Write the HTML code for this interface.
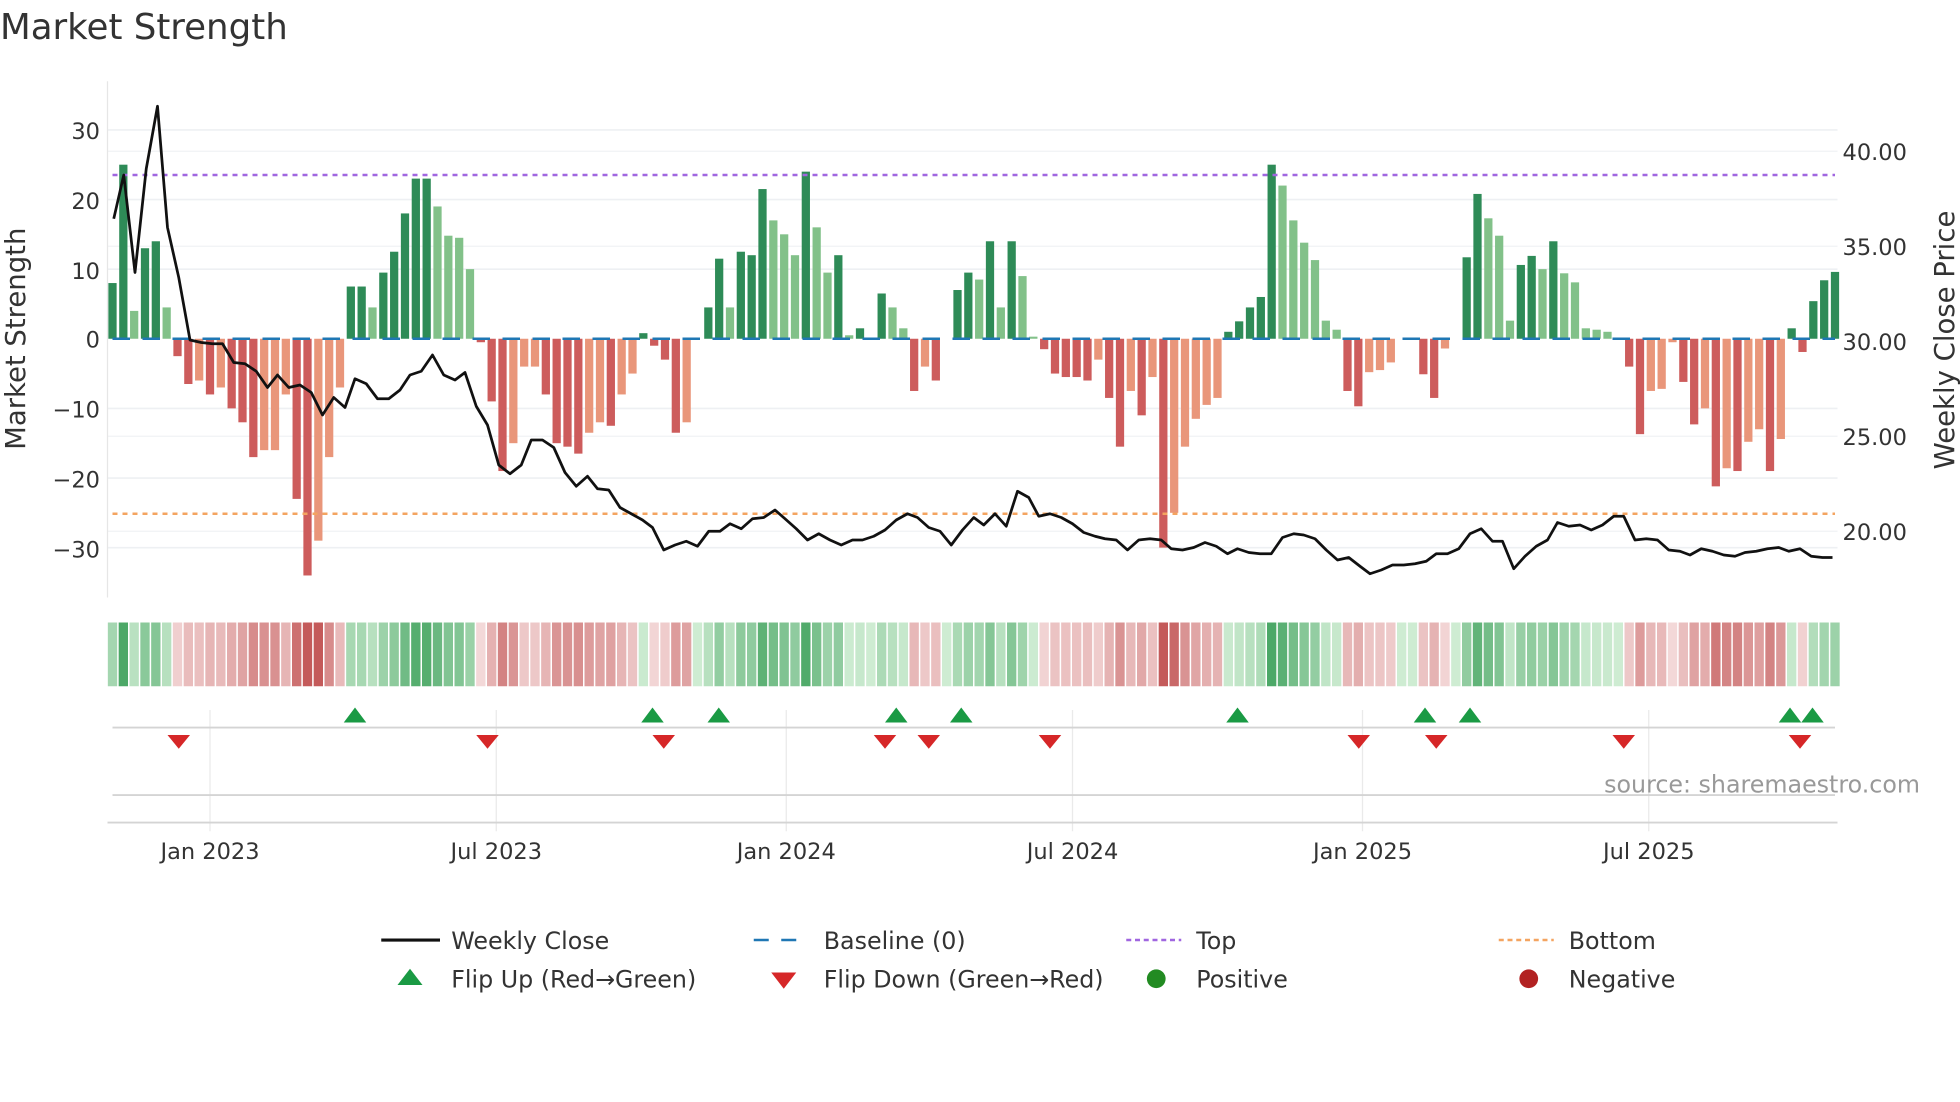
<!DOCTYPE html>
<html><head><meta charset="utf-8"><style>
html,body{margin:0;padding:0;background:#fff;}
svg{display:block;font-family:"DejaVu Sans","Liberation Sans",sans-serif;}
</style></head><body>
<svg id="s" width="1960" height="1102" viewBox="0 0 1568 881.6" xmlns="http://www.w3.org/2000/svg">
<rect width="1568" height="882" fill="#fff"/>
<text x="0" y="31" font-size="28.5" fill="#333">Market Strength</text>
<g id="grid"></g>
<g id="bars"></g>
<line x1="90" y1="271" x2="1468" y2="271" stroke="#1f77b4" stroke-width="2" stroke-dasharray="14,10"/>
<line x1="90" y1="140" x2="1468" y2="140" stroke="#a066e0" stroke-width="2" stroke-dasharray="4,4"/>
<line x1="90" y1="411" x2="1468" y2="411" stroke="#f4a460" stroke-width="2" stroke-dasharray="4,4"/>
<polyline id="price" fill="none" stroke="#111" stroke-width="2.2" stroke-linejoin="round"/>
<g id="heat"></g>
<g id="marks"></g>
<g font-size="18" fill="#333">
<text x="80" y="111" text-anchor="end">30</text>
<text x="80" y="167" text-anchor="end">20</text>
<text x="80" y="223" text-anchor="end">10</text>
<text x="80" y="278" text-anchor="end">0</text>
<text x="80" y="334" text-anchor="end">−10</text>
<text x="80" y="390" text-anchor="end">−20</text>
<text x="80" y="446" text-anchor="end">−30</text>
<text x="1474" y="128">40.00</text>
<text x="1474" y="204">35.00</text>
<text x="1474" y="280">30.00</text>
<text x="1474" y="356">25.00</text>
<text x="1474" y="432">20.00</text>
<text x="168" y="687" text-anchor="middle">Jan 2023</text>
<text x="397" y="687" text-anchor="middle">Jul 2023</text>
<text x="629" y="687" text-anchor="middle">Jan 2024</text>
<text x="858" y="687" text-anchor="middle">Jul 2024</text>
<text x="1090" y="687" text-anchor="middle">Jan 2025</text>
<text x="1319" y="687" text-anchor="middle">Jul 2025</text>
</g>
<text transform="translate(20,271) rotate(-90)" font-size="22" fill="#333" text-anchor="middle">Market Strength</text>
<text transform="translate(1563,272) rotate(-90)" font-size="22" fill="#333" text-anchor="middle">Weekly Close Price</text>
<text x="1536" y="634" font-size="19" fill="#999" text-anchor="end">source: sharemaestro.com</text>
<g font-size="19" fill="#333">
<line x1="305" y1="752" x2="352" y2="752" stroke="#111" stroke-width="2.5"/>
<text x="361" y="759">Weekly Close</text>
<line x1="603" y1="752" x2="647" y2="752" stroke="#1f77b4" stroke-width="2" stroke-dasharray="12,10"/>
<text x="659" y="759">Baseline (0)</text>
<line x1="901" y1="752" x2="945" y2="752" stroke="#a066e0" stroke-width="2" stroke-dasharray="4,3"/>
<text x="957" y="759">Top</text>
<line x1="1199" y1="752" x2="1243" y2="752" stroke="#f4a460" stroke-width="2" stroke-dasharray="4,3"/>
<text x="1255" y="759">Bottom</text>
<path d="M328 775 L338 788 L318 788 Z" fill="#1a9a44"/>
<text x="361" y="790">Flip Up (Red→Green)</text>
<path d="M617 778 L637 778 L627 791 Z" fill="#d62728"/>
<text x="659" y="790">Flip Down (Green→Red)</text>
<circle cx="925" cy="783" r="7.5" fill="#228b22"/>
<text x="957" y="790">Positive</text>
<circle cx="1223" cy="783" r="7.5" fill="#b22222"/>
<text x="1255" y="790">Negative</text>
</g>
</svg>
<script>
var NS="http://www.w3.org/2000/svg";
function el(p,t,a){var e=document.createElementNS(NS,t);for(var k in a)e.setAttribute(k,a[k]);p.appendChild(e);return e;}
var A=[[8,0],[25,0],[4,1],[13,0],[14,0],[4.5,1],[-2.5,0],[-6.5,0],[-6,1],[-8,0],[-7,1],[-10,0],[-12,0],[-17,0],[-16,1],[-16,1],[-8,1],[-23,0],[-34,0],[-29,1],[-17,1],[-7,1],[7.5,0],[7.5,0],[4.5,1],[9.5,0],[12.5,0],[18,0],[23,0],[23,0],[19,1],[14.8,1],[14.5,1],[10,1],[-0.5,0],[-9,0],[-19,0],[-15,1],[-4,1],[-4,1],[-8,0],[-15,0],[-15.5,0],[-16.5,0],[-13.5,1],[-12,1],[-12.5,0],[-8,1],[-5,1],[0.8,0],[-1,0],[-3,0],[-13.5,0],[-12,1],[0,0],[4.5,0],[11.5,0],[4.5,1],[12.5,0],[12,0],[21.5,0],[17,1],[15,1],[12,1],[24,0],[16,1],[9.5,1],[12,0],[0.5,1],[1.5,0],[0,0],[6.5,0],[4.5,1],[1.5,1],[-7.5,0],[-4,1],[-6,0],[0,0],[7,0],[9.5,0],[8.5,1],[14,0],[4.5,1],[14,0],[9,1],[0.3,1],[-1.5,0],[-5,0],[-5.5,0],[-5.5,0],[-6,0],[-3,1],[-8.5,0],[-15.5,0],[-7.5,1],[-11,0],[-5.5,1],[-30,0],[-25,1],[-15.5,1],[-11.5,1],[-9.5,1],[-8.5,1],[1,0],[2.5,0],[4.5,0],[6,0],[25,0],[22,1],[17,1],
[13.8,1],[11.3,1],[2.6,1],[1.3,1],[-7.5,0],[-9.7,0],[-4.8,1],[-4.5,1],[-3.4,1],[0,0],[0,0],[-5.1,0],[-8.5,0],[-1.4,1],[0,0],[11.7,0],[20.8,0],[17.3,1],[14.8,1],[2.6,1],[10.6,0],[11.9,0],[10,1],[14,0],[9.4,1],[8.1,1],[1.5,1],[1.3,1],[1,1],[0,0],[-4,0],[-13.7,0],[-7.5,1],[-7.2,1],[-0.5,1],[-6.2,0],[-12.3,0],[-10,1],[-21.2,0],[-18.6,1],[-19,0],[-14.8,1],[-13,1],[-19,0],[-14.4,1],[1.5,0],[-1.9,0],[5.4,0],[8.4,0],[9.6,0]];
var n=A.length,x0=90,dx=(1468-90)/(n-1),k=5.57;
var g=document.getElementById("grid");
[30,20,10,-10,-20,-30].forEach(function(v){var y=271-v*k;el(g,"line",{x1:86,x2:1470,y1:y,y2:y,stroke:"#eef0f3","stroke-width":1.3});});
[40,35,25,20].forEach(function(v){var y=273-(v-30)*15.2;el(g,"line",{x1:86,x2:1470,y1:y,y2:y,stroke:"#f1f2f5","stroke-width":1});});
el(g,"line",{x1:86,x2:86,y1:65,y2:478,stroke:"#e6e6e6","stroke-width":1});
[168,397,629,858,1090,1319].forEach(function(x){el(g,"line",{x1:x,x2:x,y1:568,y2:665,stroke:"#eaeaea","stroke-width":1});});
el(g,"line",{x1:90,x2:1468,y1:582,y2:582,stroke:"#d4d4d4","stroke-width":1.5});
el(g,"line",{x1:90,x2:1468,y1:636,y2:636,stroke:"#d4d4d4","stroke-width":1.5});
el(g,"line",{x1:86,x2:1470,y1:658,y2:658,stroke:"#d4d4d4","stroke-width":1.5});
var b=document.getElementById("bars"),h=document.getElementById("heat");
function mix(c1,c2,t){var r=[];for(var i=0;i<3;i++)r.push(Math.round(c1[i]+(c2[i]-c1[i])*t));return "rgb("+r.join(",")+")";}
A.forEach(function(d,i){var v=d[0],x=x0+i*dx,w=6.6;
 var col=v>=0?(d[1]?"#82c189":"#2e8b57"):(d[1]?"#e9967a":"#cd5c5c");
 if(v!=0){var y=v>0?271-v*k:271;el(b,"rect",{x:x-w/2,y:y,width:w,height:Math.abs(v)*k,fill:col});}
 var t=Math.min(Math.abs(v)/28,1);
 var hc=v>=0?mix([206,236,210],[60,160,90],t):mix([244,218,218],[196,90,90],t);
 el(h,"rect",{x:x-dx/2+0.6,y:498,width:dx-1.2,height:51,fill:hc});
});
var P=[[91,175],[99,140],[108,218],[117,135],[126,85],[134,182],[143,222],[152,272],[161,274],[170,275],[178,275],[187,290],[196,291],[205,297],[214,310],[222,300],[231,310],[240,308],[249,314],[258,332],[267,318],[276,326],[284,303],[293,307],[302,319],[311,319],[320,312],[328,300],[337,297],[346,284],[355,300],[364,304],[372,298],[381,325],[390,340],[399,372],[408,379],[417,372],[425,352],[434,352],[443,358],[452,378],[461,389],[470,381],[478,391],[487,392],[496,406],[505,411],[514,416],[522,422],[531,440],[540,436],[549,433],[558,437],[567,425],[576,425],[584,419],[593,423],[602,415],[611,414],[620,408],[628,415],[637,423],[646,432],[655,427],[664,432],[673,436],[682,432],[690,432],[699,429],[708,424],[717,416],[726,411],[734,414],[743,422],[752,425],[761,436],[770,424],[779,414],[787,420],[796,411],[805,421],[814,393],[823,398],[831,413],[840,411],[849,414],[858,419],[867,426],[876,429],[884,431],[893,432],[902,440],[911,432],[920,431],[929,432],[937,439],[946,440],[955,438],[964,434],[973,437],[982,443],[990,439],[999,442],[1008,443],[1017,443],[1026,430],[1035,427],[1043,428],[1052,431],[1061,440],[1070,448],[1079,446],[1088,453],[1096,459],[1105,456],[1114,452],[1123,452],[1132,451],[1141,449],[1149,443],[1158,443],[1167,439],[1176,427],[1185,423],[1194,433],[1202,433],[1211,455],[1220,445],[1229,437],[1238,432],[1246,418],[1255,421],[1264,420],[1273,424],[1282,420],[1291,413],[1299,413],[1308,432],[1317,431],[1326,432],[1335,440],[1344,441],[1352,444],[1361,439],[1370,441],[1379,444],[1388,445],[1396,442],[1405,441],[1414,439],[1423,438],[1431,441],[1440,439],[1449,445],[1458,446],[1466,446]];
document.getElementById("price").setAttribute("points",P.map(function(p){return p.join(",");}).join(" "));
var m=document.getElementById("marks");
[284,522,575,717,769,990,1140,1176,1432,1450].forEach(function(x){el(m,"path",{d:"M"+x+" 566 L"+(x+9)+" 578 L"+(x-9)+" 578 Z",fill:"#1a9a44"});});
[143,390,531,708,743,840,1087,1149,1299,1440].forEach(function(x){el(m,"path",{d:"M"+(x-9)+" 588 L"+(x+9)+" 588 L"+x+" 599 Z",fill:"#d62728"});});
</script>
</body></html>
